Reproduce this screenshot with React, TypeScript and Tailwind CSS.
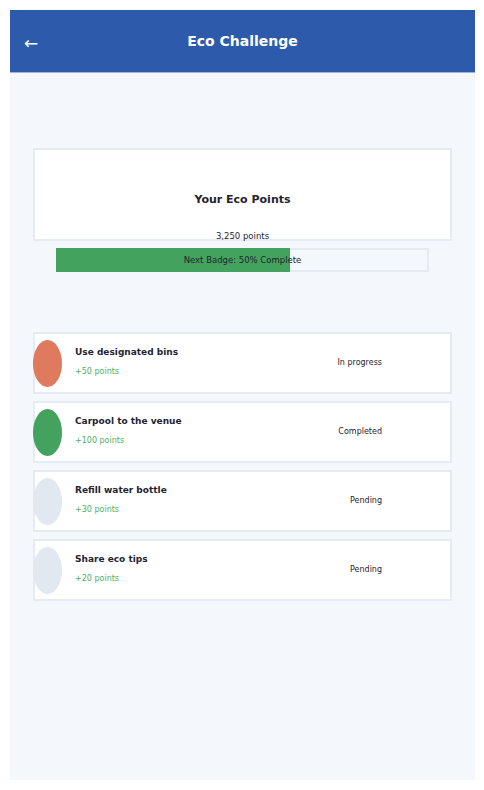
const challenges = [
  { title: "Use designated bins", points: 50, status: "In progress", dot: "bg-[#e07a5f]" },
  { title: "Carpool to the venue", points: 100, status: "Completed", dot: "bg-[#43a35e]" },
  { title: "Refill water bottle", points: 30, status: "Pending", dot: "bg-[#e2e8f0]" },
  { title: "Share eco tips", points: 20, status: "Pending", dot: "bg-[#e2e8f0]" },
];

export default function App() {
  return (
    <div className="bg-white p-[10px] font-['DejaVu_Sans',sans-serif] text-[#1f2430]">
      <div className="w-[465px] h-[770px] bg-[#f4f7fb] overflow-hidden">
        <header className="relative h-[63px] bg-[#2d5aab] border-b border-[#9db4e0] flex items-center justify-center">
          <span className="absolute left-[14px] top-[25px] text-white text-[17px] leading-none">←</span>
          <h1 className="text-white text-[14px] font-bold">Eco Challenge</h1>
        </header>

        <div className="px-[23px] pt-[75px]">
          <div className="h-[93px] bg-white border-2 border-[#e5ebf3] pt-[43px] text-center">
            <h2 className="text-[11px] font-bold leading-[14px]">Your Eco Points</h2>
            <p className="mt-[24px] text-[8.5px] leading-[11px]">3,250 points</p>
          </div>

          <div className="mx-[23px] mt-[7px] relative h-[24px] bg-[#f4f7fb] border-2 border-[#e5ebf3] flex items-center justify-center">
            <div className="absolute -left-[2px] -top-[2px] -bottom-[2px] w-[234px] bg-[#43a35e]" />
            <span className="relative text-[8.5px]">Next Badge: 50% Complete</span>
          </div>

          <ul className="mt-[60px] flex flex-col gap-[7px]">
            {challenges.map((c) => (
              <li key={c.title} className="h-[62px] bg-white border-2 border-[#e5ebf3] flex items-center">
                <div className={`-ml-[2px] w-[29px] h-[47px] rounded-[50%] ${c.dot}`} />
                <div className="ml-[13px] flex-1 -mt-[3px]">
                  <p className="text-[9px] font-bold leading-[12px]">{c.title}</p>
                  <p className="mt-[8px] text-[8px] text-[#4caf64] leading-[11px]">+{c.points} points</p>
                </div>
                <span className="mr-[68px] text-[8px]">{c.status}</span>
              </li>
            ))}
          </ul>
        </div>
      </div>
    </div>
  );
}
